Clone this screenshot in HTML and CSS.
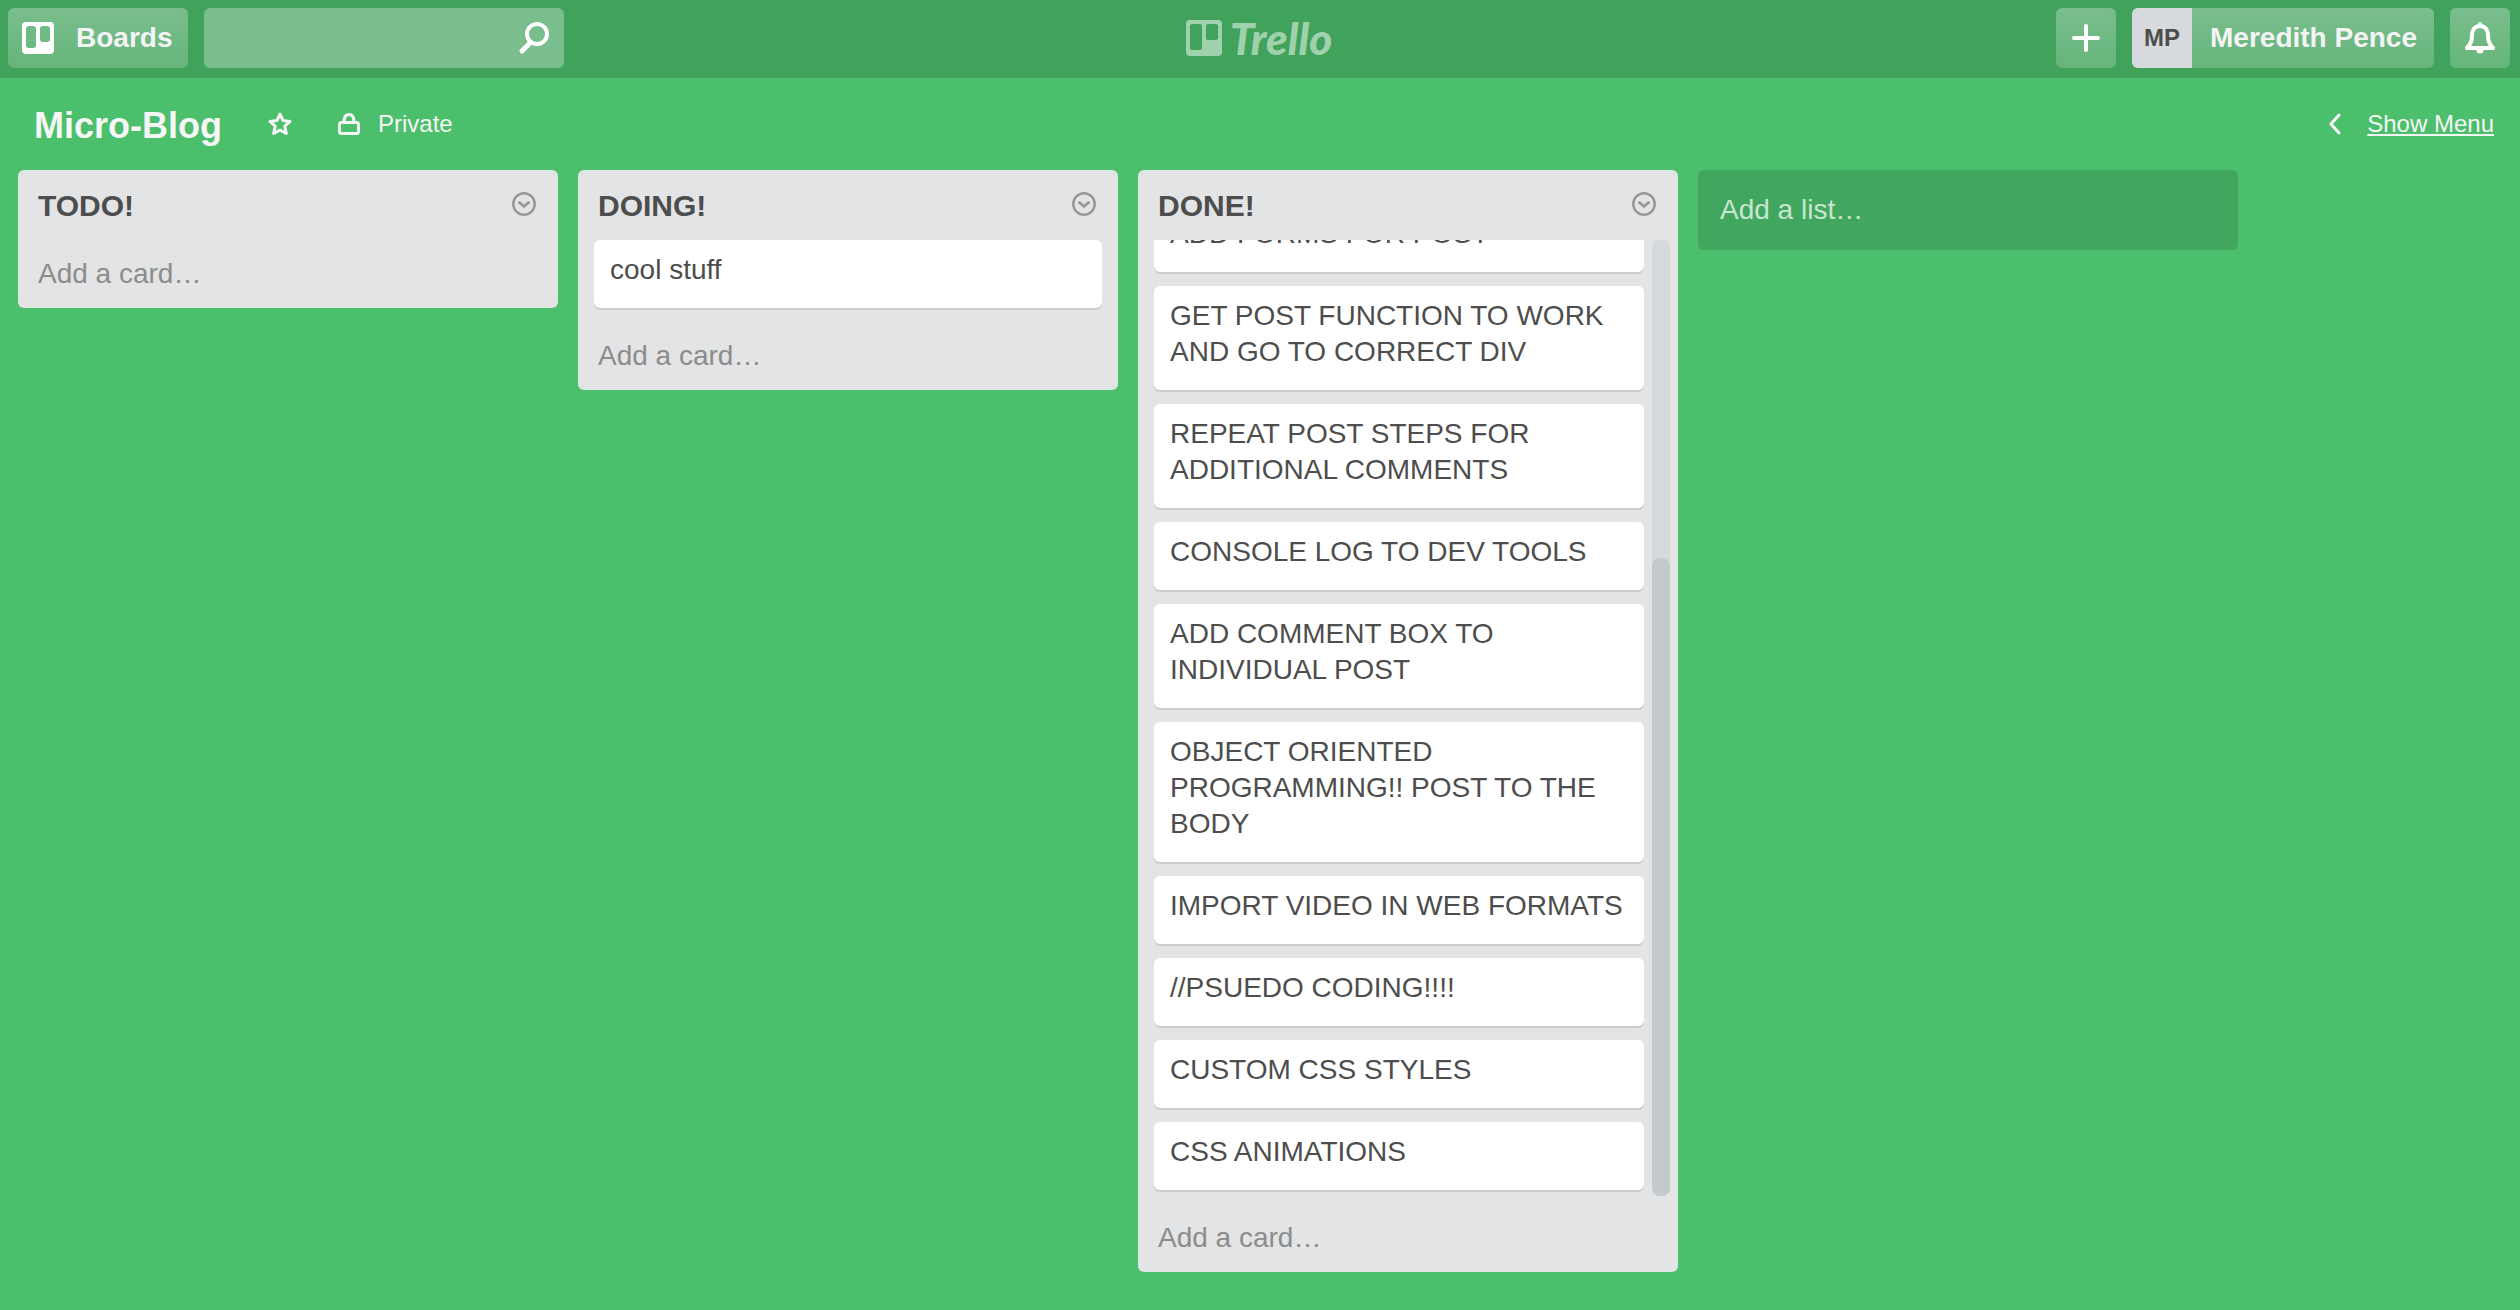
FILE: index.html
```html
<!DOCTYPE html>
<html lang="en">
<head>
<meta charset="utf-8">
<meta name="viewport" content="width=device-width, initial-scale=1">
<title>Micro-Blog | Trello</title>
<link rel="stylesheet" href="styles.css">
</head>
<body>
<header class="topbar">
  <div class="topbar-side">
    <button class="bar-button boards-button" type="button">
      <svg width="32" height="32" viewBox="0 0 32 32" aria-hidden="true"><path fill="#fff" fill-rule="evenodd" d="M4 0h24a4 4 0 0 1 4 4v24a4 4 0 0 1-4 4H4a4 4 0 0 1-4-4V4a4 4 0 0 1 4-4zM7 4a3 3 0 0 0-3 3v16a3 3 0 0 0 3 3h4a3 3 0 0 0 3-3V7a3 3 0 0 0-3-3zm14 0a3 3 0 0 0-3 3v10a3 3 0 0 0 3 3h4a3 3 0 0 0 3-3V7a3 3 0 0 0-3-3z"/></svg>
      <span>Boards</span>
    </button>
    <form class="search" role="search">
      <input class="search-input" type="text" aria-label="Search">
      <button class="search-button" type="submit" aria-label="Search">
        <svg width="32" height="34" viewBox="0 0 32 34" fill="none" stroke="#fff" stroke-width="4" stroke-linecap="round" aria-hidden="true"><circle cx="19" cy="13" r="10"/><path stroke-width="5" d="M12 22 4 30"/></svg>
      </button>
    </form>
  </div>
  <a class="logo" href="#" aria-label="Trello">
    <svg width="36" height="36" viewBox="0 0 36 36" aria-hidden="true"><path fill="currentColor" fill-rule="evenodd" d="M4 0h28a4 4 0 0 1 4 4v28a4 4 0 0 1-4 4H4a4 4 0 0 1-4-4V4a4 4 0 0 1 4-4zM6 4a2 2 0 0 0-2 2v22a2 2 0 0 0 2 2h8a2 2 0 0 0 2-2V6a2 2 0 0 0-2-2zm16 0a2 2 0 0 0-2 2v12a2 2 0 0 0 2 2h8a2 2 0 0 0 2-2V6a2 2 0 0 0-2-2z"/></svg>
    <span class="logo-word">Trello</span>
  </a>
  <div class="topbar-side topbar-right">
    <button class="bar-button icon-button" type="button" aria-label="Add">
      <svg width="28" height="28" viewBox="0 0 28 28" fill="none" stroke="#fff" stroke-width="4" stroke-linecap="round" aria-hidden="true"><path d="M14 2v24M2 14h24"/></svg>
    </button>
    <button class="bar-button member" type="button">
      <span class="avatar">MP</span>
      <span class="member-name">Meredith Pence</span>
    </button>
    <button class="bar-button icon-button" type="button" aria-label="Notifications">
      <svg width="30" height="32" viewBox="0 0 30 32" aria-hidden="true"><path fill="#fff" d="M11 27h8a4 4.500 0 0 1-8 0z"/><circle cx="15" cy="2" r="2" fill="#fff"/><path fill="none" stroke="#fff" stroke-width="4" stroke-linejoin="round" d="M15 4C9 4 7 9 7 14c0 6-2 9-5 12h26c-3-3-5-6-5-12 0-5-2-10-8-10z"/></svg>
    </button>
  </div>
</header>

<div class="board-header">
  <h1 class="board-title">Micro-Blog</h1>
  <button class="plain-button" type="button" aria-label="Star this board">
    <svg width="24" height="24" viewBox="0 0 24 24" fill="none" stroke="currentColor" stroke-width="3" stroke-linejoin="round" aria-hidden="true"><path d="m12 2 3 6.500 7 .9-5.200 4.800 1.500 7.300L12 18l-6.300 3.500 1.500-7.300L2 9.400l7-.9z"/></svg>
  </button>
  <button class="plain-button" type="button">
    <svg width="22" height="22" viewBox="0 0 22 22" fill="none" stroke="currentColor" stroke-width="3" aria-hidden="true"><rect x="1.500" y="9.500" width="19" height="11" rx="2"/><path d="M6 9c0-5 2-7.500 5-7.500S16 4 16 9"/></svg>
    <span>Private</span>
  </button>
  <a class="show-menu" href="#">
    <svg width="12" height="22" viewBox="0 0 12 22" fill="none" stroke="currentColor" stroke-width="3" stroke-linecap="round" stroke-linejoin="round" aria-hidden="true"><path d="m10 2-8 9 8 9"/></svg>
    <span class="show-menu-text">Show Menu</span>
  </a>
</div>

<main class="board">
  <section class="list">
    <div class="list-header">
      <h2 class="list-title">TODO!</h2>
      <button class="list-menu" type="button" aria-label="List actions"><svg width="24" height="24" viewBox="0 0 24 24" fill="none" stroke="currentColor" aria-hidden="true"><circle cx="12" cy="12" r="10.700" stroke-width="2.500"/><path stroke-width="3" stroke-linecap="round" stroke-linejoin="round" d="m7.500 10.500 4.500 4 4.500-4"/></svg></button>
    </div>
    <a class="add-card" href="#">Add a card…</a>
  </section>

  <section class="list">
    <div class="list-header">
      <h2 class="list-title">DOING!</h2>
      <button class="list-menu" type="button" aria-label="List actions"><svg width="24" height="24" viewBox="0 0 24 24" fill="none" stroke="currentColor" aria-hidden="true"><circle cx="12" cy="12" r="10.700" stroke-width="2.500"/><path stroke-width="3" stroke-linecap="round" stroke-linejoin="round" d="m7.500 10.500 4.500 4 4.500-4"/></svg></button>
    </div>
    <div class="list-body">
      <div class="cards">
        <a class="card" href="#">cool stuff</a>
      </div>
    </div>
    <a class="add-card" href="#">Add a card…</a>
  </section>

  <section class="list">
    <div class="list-header">
      <h2 class="list-title">DONE!</h2>
      <button class="list-menu" type="button" aria-label="List actions"><svg width="24" height="24" viewBox="0 0 24 24" fill="none" stroke="currentColor" aria-hidden="true"><circle cx="12" cy="12" r="10.700" stroke-width="2.500"/><path stroke-width="3" stroke-linecap="round" stroke-linejoin="round" d="m7.500 10.500 4.500 4 4.500-4"/></svg></button>
    </div>
    <div class="list-body list-body-scroll">
      <div class="cards">
        <a class="card" href="#">ADD FORMS FOR POST</a>
        <a class="card" href="#">GET POST FUNCTION TO WORK AND GO TO CORRECT DIV</a>
        <a class="card" href="#">REPEAT POST STEPS FOR ADDITIONAL COMMENTS</a>
        <a class="card" href="#">CONSOLE LOG TO DEV TOOLS</a>
        <a class="card" href="#">ADD COMMENT BOX TO INDIVIDUAL POST</a>
        <a class="card" href="#">OBJECT ORIENTED PROGRAMMING!! POST TO THE BODY</a>
        <a class="card" href="#">IMPORT VIDEO IN WEB FORMATS</a>
        <a class="card" href="#">//PSUEDO CODING!!!!</a>
        <a class="card" href="#">CUSTOM CSS STYLES</a>
        <a class="card" href="#">CSS ANIMATIONS</a>
      </div>
      <div class="scroll-track"><div class="scroll-thumb" style="height: 66.7%"></div></div>
    </div>
    <a class="add-card" href="#">Add a card…</a>
  </section>

  <button class="add-list" type="button">Add a list…</button>
</main>
</body>
</html>
```

FILE: styles.css
```css
* {
  box-sizing: border-box;
}

body {
  margin: 0;
  height: 100vh;
  display: flex;
  flex-direction: column;
  overflow: hidden;
  background: #4bbf6b;
  color: #4d4d4d;
  font-family: "Liberation Sans", Arial, sans-serif;
  font-size: 28px;
  line-height: 36px;
}

button,
input {
  font: inherit;
  color: inherit;
  border: 0;
  padding: 0;
  margin: 0;
  background: none;
}

button {
  cursor: pointer;
}

a {
  color: inherit;
  text-decoration: none;
}

svg {
  display: block;
  flex: none;
}

/* Top bar */
.topbar {
  display: grid;
  grid-template-columns: 1fr auto 1fr;
  align-items: center;
  padding: 8px 10px 10px 8px;
  background: #40a25b;
}

.topbar-side {
  display: flex;
  gap: 16px;
}

.topbar-right {
  justify-content: flex-end;
}

.bar-button {
  display: flex;
  align-items: center;
  height: 60px;
  border-radius: 6px;
  background: linear-gradient(to bottom, rgba(255, 255, 255, .3), rgba(255, 255, 255, .2));
  color: #f4f4f4;
  font-weight: bold;
}

.boards-button {
  gap: 22px;
  padding: 0 16px 0 14px;
}

.icon-button {
  width: 60px;
  justify-content: center;
}

.search {
  display: flex;
  align-items: center;
  width: 360px;
  height: 60px;
  padding-right: 14px;
  border-radius: 6px;
  background: rgba(255, 255, 255, .3);
}

.search-input {
  flex: 1;
  min-width: 0;
  height: 60px;
  padding: 0 14px;
  color: #fff;
}

.logo {
  display: flex;
  align-items: center;
  gap: 8px;
  color: #a0d1ad;
}

.logo-word {
  font-family: Lato, "Liberation Sans", sans-serif;
  font-size: 44px;
  font-style: italic;
  font-weight: 900;
}

.avatar {
  width: 60px;
  line-height: 60px;
  border-radius: 6px 0 0 6px;
  background: #d6dadc;
  color: #4d4d4d;
  font-size: 24px;
  text-align: center;
}

.member-name {
  padding: 0 17px 0 18px;
}

/* Board header */
.board-header {
  display: flex;
  align-items: center;
  gap: 46px;
  padding: 22px 26px 22px 34px;
  color: #f6f6f6;
  font-size: 24px;
}

.board-title {
  margin: 0;
  padding-top: 4px;
  font-size: 36px;
  line-height: 44px;
}

.plain-button {
  display: flex;
  align-items: center;
  gap: 18px;
}

.show-menu {
  display: flex;
  align-items: center;
  gap: 26px;
  margin-left: auto;
}

.show-menu-text {
  text-decoration: underline;
}

/* Lists */
.board {
  flex: 1;
  min-height: 0;
  display: flex;
  align-items: flex-start;
  gap: 20px;
  padding: 0 18px 38px;
}

.list,
.add-list {
  flex: none;
  width: 540px;
  border-radius: 6px;
}

.list {
  display: flex;
  flex-direction: column;
  max-height: 100%;
  background: #e2e4e6;
}

.list-header {
  display: flex;
  align-items: center;
  justify-content: space-between;
  padding: 18px 22px 16px 20px;
}

.list-title {
  margin: 0;
  font-size: 30px;
  line-height: 36px;
}

.list-menu {
  margin-bottom: 4px;
  color: #999;
}

.list-body {
  display: flex;
  min-height: 0;
  padding: 0 16px;
}

.list-body-scroll {
  gap: 8px;
  padding-right: 8px;
}

/* The long list rests at its end, so its first card is partly scrolled away */
.cards {
  flex: 1;
  min-width: 0;
  display: flex;
  flex-direction: column;
  justify-content: flex-end;
  gap: 12px;
  padding-bottom: 12px;
  overflow: hidden;
}

.card {
  flex: none;
  margin-bottom: 2px;
  padding: 12px 16px 20px;
  border-radius: 6px;
  background: #fff;
  box-shadow: 0 2px 0 #cbcccd;
}

.scroll-track {
  display: flex;
  flex-direction: column;
  justify-content: flex-end;
  width: 18px;
  margin-bottom: 8px;
  border-radius: 8px;
  background: #d6dadc;
}

.scroll-thumb {
  border-radius: 8px;
  background: #c4c9cc;
}

.add-card {
  flex: none;
  padding: 16px 20px;
  color: #8c8c8c;
}

.add-list {
  padding: 22px;
  background: rgba(0, 0, 0, .12);
  color: #c7e5cf;
  text-align: left;
}
```
